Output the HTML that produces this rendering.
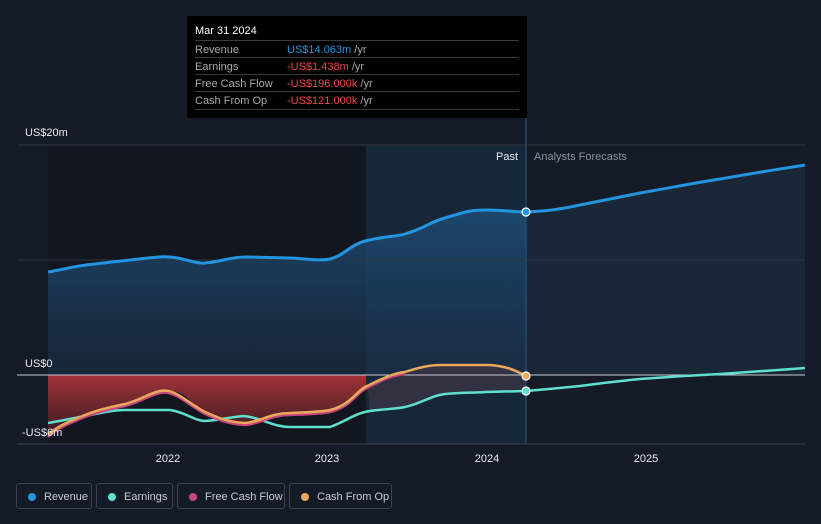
<!DOCTYPE html>
<html><head><style>
body{margin:0;background:#151b26;font-family:"Liberation Sans",sans-serif;}
.wrap{position:relative;width:821px;height:524px;overflow:hidden;background:#151b26;}
.tt{position:absolute;left:187px;top:16px;width:340px;height:102px;background:#000;color:#fff;font-size:11px;}
.tt .h{position:absolute;left:8px;top:9px;}
.tt .r{position:absolute;left:8px;width:324px;height:17px;border-top:1px solid #3a3a3a;}
.tt .r span{position:absolute;top:3px;}
.lg{position:absolute;top:483px;height:26px;border:1px solid #3a4250;border-radius:3px;color:#c8ccd2;font-size:11px;line-height:26px;box-sizing:border-box;}
.lg i{position:absolute;left:11px;top:9px;width:8px;height:8px;border-radius:50%;}
.lg span{position:absolute;left:27px;top:0}
</style></head><body><div class="wrap">
<svg width="821" height="524" style="position:absolute;left:0;top:0">
<defs>
<linearGradient id="rv" x1="0" y1="0" x2="0" y2="1"><stop offset="0" stop-color="#1d4a72" stop-opacity=".9"/><stop offset="1" stop-color="#1a3048" stop-opacity=".6"/></linearGradient>
<linearGradient id="rd" x1="0" y1="0" x2="0" y2="1"><stop offset="0" stop-color="#a03236"/><stop offset="1" stop-color="#3a1b22"/></linearGradient>
</defs>
<rect x="48" y="145" width="318" height="299" fill="#12161e"/>
<rect x="366" y="145" width="160" height="299" fill="#17273a"/>
<path d="M48,272 C70,268 80,265 95,264 C110,262 120,261 130,260 C150,258 160,256 170,257 C185,258 195,264 205,263 C220,262 230,257 245,257 C265,257 280,258 290,258 C310,259 320,261 330,259 C345,255 350,245 365,241 C385,236 395,237 405,234 C425,228 430,222 445,218 C465,212 470,210 485,210 C505,210 515,212 526,212 L526,375 L48,375Z" fill="url(#rv)"/>
<path d="M526,212 C545,211 555,210 570,207 C600,201 610,199 640,193 C680,186 700,182 720,179 C760,172 780,169 805,165 L805,375 L526,375Z" fill="#1b2a3b" opacity=".8"/>
<path d="M48,375 L366,375 L366,387 C350,398 345,410 330,410 L290,413 C270,414 260,423 245,423 C225,423 215,418 205,412 C190,403 185,391 170,391 C150,393 140,400 125,404 C105,409 95,411 85,415 C65,423 55,428 48,435Z" fill="url(#rd)"/>
<path d="M366,375 L366,387 C385,378 395,372 405,372 C420,366 430,365 440,365 L490,365 C505,366 515,370 526,376 L526,391 L485,392 C465,393 455,393 445,394 C425,398 415,405 405,407 C385,410 375,409 370,411Z" fill="#3a3444" opacity=".8"/>
<line x1="17" y1="145" x2="805" y2="145" stroke="#2e3542"/>
<line x1="17" y1="260" x2="805" y2="260" stroke="#2e3542"/>
<line x1="17" y1="444" x2="805" y2="444" stroke="#3a4250"/>
<line x1="17" y1="375" x2="805" y2="375" stroke="#c8ccd2" stroke-width="1"/>
<line x1="526" y1="118" x2="526" y2="444" stroke="#2a5a85"/>
<path d="M48,272 C70,268 80,265 95,264 C110,262 120,261 130,260 C150,258 160,256 170,257 C185,258 195,264 205,263 C220,262 230,257 245,257 C265,257 280,258 290,258 C310,259 320,261 330,259 C345,255 350,245 365,241 C385,236 395,237 405,234 C425,228 430,222 445,218 C465,212 470,210 485,210 C505,210 515,212 526,212 C545,211 555,210 570,207 C600,201 610,199 640,193 C680,186 700,182 720,179 C760,172 780,169 805,165" fill="none" stroke="#2394df" stroke-width="3"/>
<path d="M48,423 C65,420 75,418 90,415 C105,412 115,410 125,410 L170,410 C185,412 195,421 205,421 C225,420 240,414 250,417 C265,420 275,427 290,427 L330,427 C345,422 355,413 370,411 C385,409 395,409 405,407 C420,404 430,396 445,394 C465,392 475,393 485,392 L526,391 C550,389 560,388 580,386 C610,382 620,381 640,379 C680,376 700,375 720,374 C760,371 780,370 805,368" fill="none" stroke="#5ee0cf" stroke-width="2.5"/>
<path d="M48,437 C55,430 65,425 85,417 C95,413 105,410 125,406 C140,402 150,395 160,393 C175,390 185,403 205,414 C215,418 225,424 245,425 C260,424 270,415 290,415 C310,414 320,414 330,412 C350,407 355,395 365,389 C385,378 395,375 405,374" fill="none" stroke="#c8457f" stroke-width="2.5"/>
<path d="M48,435 C55,428 65,423 85,415 C95,411 105,408 125,404 C140,400 150,393 160,391 C175,388 185,401 205,412 C215,416 225,422 245,423 C260,422 270,413 290,413 C310,412 320,412 330,410 C350,405 355,393 365,387 C385,377 395,373 405,372 C420,367 430,365 440,365 L490,365 C505,366 515,370 526,376" fill="none" stroke="#e8a95a" stroke-width="2.5"/>
<circle cx="526" cy="212" r="4" fill="#2394df" stroke="#fff" stroke-width="1.2"/>
<circle cx="526" cy="391" r="4" fill="#5ee0cf" stroke="#fff" stroke-width="1.2"/>
<circle cx="526" cy="376" r="4" fill="#e8a95a" stroke="#fff" stroke-width="1.2"/>
<g font-size="11" fill="#e8eaed">
<text x="25" y="136">US$20m</text>
<text x="25" y="367">US$0</text>
<text x="22" y="436">-US$6m</text>
<text x="518" y="160" text-anchor="end">Past</text>
<text x="534" y="160" fill="#8a919c">Analysts Forecasts</text>
<text x="168" y="462" text-anchor="middle">2022</text>
<text x="327" y="462" text-anchor="middle">2023</text>
<text x="487" y="462" text-anchor="middle">2024</text>
<text x="646" y="462" text-anchor="middle">2025</text>
</g>
</svg>
<div class="tt">
<div class="h">Mar 31 2024</div>
<div class="r" style="top:24px"><span style="left:0;color:#aaa">Revenue</span><span style="left:92px;color:#2394df">US$14.063m <b style="font-weight:normal;color:#aaa">/yr</b></span></div>
<div class="r" style="top:41px"><span style="left:0;color:#aaa">Earnings</span><span style="left:92px;color:#f04848">-US$1.438m <b style="font-weight:normal;color:#aaa">/yr</b></span></div>
<div class="r" style="top:58px"><span style="left:0;color:#aaa">Free Cash Flow</span><span style="left:92px;color:#f04848">-US$196.000k <b style="font-weight:normal;color:#aaa">/yr</b></span></div>
<div class="r" style="top:75px;border-bottom:1px solid #3a3a3a"><span style="left:0;color:#aaa">Cash From Op</span><span style="left:92px;color:#f04848">-US$121.000k <b style="font-weight:normal;color:#aaa">/yr</b></span></div>
</div>
<div class="lg" style="left:16px;width:76px"><i style="background:#2394df"></i><span>Revenue</span></div>
<div class="lg" style="left:96px;width:77px"><i style="background:#5ee0cf"></i><span>Earnings</span></div>
<div class="lg" style="left:177px;width:108px"><i style="background:#c8457f"></i><span>Free Cash Flow</span></div>
<div class="lg" style="left:289px;width:103px"><i style="background:#e8a95a"></i><span>Cash From Op</span></div>
</div></body></html>
